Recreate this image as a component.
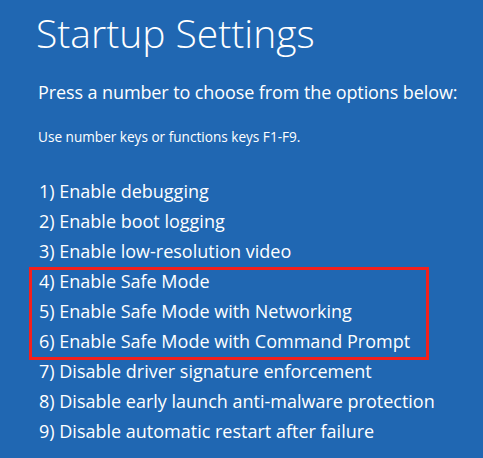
const options = [
  '1) Enable debugging',
  '2) Enable boot logging',
  '3) Enable low-resolution video',
  '4) Enable Safe Mode',
  '5) Enable Safe Mode with Networking',
  '6) Enable Safe Mode with Command Prompt',
  '7) Disable driver signature enforcement',
  '8) Disable early launch anti-malware protection',
  '9) Disable automatic restart after failure',
]

function Row({ text }: { text: string }) {
  return <div className="h-[30px] leading-[30px] text-[18px] whitespace-nowrap">{text}</div>
}

export default function App() {
  return (
    <div
      className="w-[483px] h-[458px] overflow-hidden bg-[#2067b2] text-white"
      style={{ fontFamily: '"Open Sans", "Noto Sans", sans-serif' }}
    >
      <div className="pl-[36px] pt-[14px] whitespace-nowrap">
        <h1 className="text-[39px] leading-[38px] font-light">Startup Settings</h1>
        <p className="mt-[30px] ml-[2px] text-[18px] leading-[20px] tracking-[-0.1px]">
          Press a number to choose from the options below:
        </p>
        <p className="mt-[27px] ml-[2px] text-[13.6px] leading-[16px]">Use number keys or functions keys F1-F9.</p>
      </div>
      <div className="mt-[31px] pl-[39px]">
        {options.slice(0, 3).map((o) => (
          <Row key={o} text={o} />
        ))}
        <div className="relative">
          {options.slice(3, 6).map((o) => (
            <Row key={o} text={o} />
          ))}
          <span className="absolute left-[-10px] top-[1px] w-[400px] bottom-[-4px] border-[3px] border-[#f5201c]" />
        </div>
        {options.slice(6).map((o) => (
          <Row key={o} text={o} />
        ))}
      </div>
    </div>
  )
}
